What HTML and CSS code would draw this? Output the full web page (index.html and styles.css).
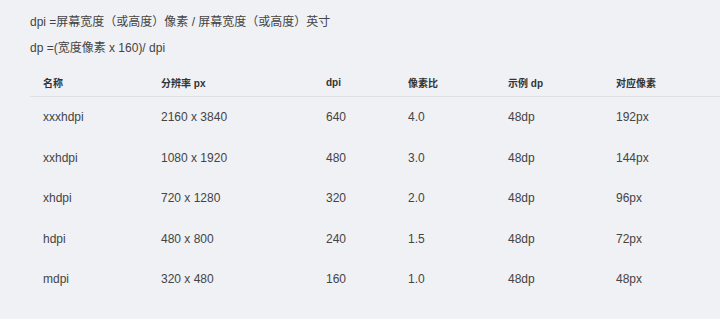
FILE: index.html
```html
<!DOCTYPE html>
<html lang="zh">
<head>
<meta charset="utf-8">
<link rel="stylesheet" href="styles.css">
</head>
<body>
<div class="page">
  <p class="formula">dpi =屏幕宽度（或高度）像素 / 屏幕宽度（或高度）英寸</p>
  <p class="formula">dp =(宽度像素 x 160)/ dpi</p>
  <div class="table">
    <div class="row head">
      <div>名称</div><div>分辨率 px</div><div>dpi</div><div>像素比</div><div>示例 dp</div><div>对应像素</div>
    </div>
    <div class="row">
      <div>xxxhdpi</div><div>2160 x 3840</div><div>640</div><div>4.0</div><div>48dp</div><div>192px</div>
    </div>
    <div class="row">
      <div>xxhdpi</div><div>1080 x 1920</div><div>480</div><div>3.0</div><div>48dp</div><div>144px</div>
    </div>
    <div class="row">
      <div>xhdpi</div><div>720 x 1280</div><div>320</div><div>2.0</div><div>48dp</div><div>96px</div>
    </div>
    <div class="row">
      <div>hdpi</div><div>480 x 800</div><div>240</div><div>1.5</div><div>48dp</div><div>72px</div>
    </div>
    <div class="row">
      <div>mdpi</div><div>320 x 480</div><div>160</div><div>1.0</div><div>48dp</div><div>48px</div>
    </div>
  </div>
</div>
</body>
</html>
```
FILE: styles.css
```css
html, body {
  margin: 0;
  padding: 0;
  background: #f0f1f5;
}
body {
  font-family: "Liberation Sans", "Noto Sans CJK SC", sans-serif;
  color: #444;
  font-size: 12px;
}
.page {
  padding: 14px 0 0 30px;
}
.formula {
  margin: 0 0 10px 0;
  line-height: 16px;
}
.table {
  margin-top: 12px;
}
.row {
  display: grid;
  grid-template-columns: 131px 165px 82px 100px 108px 1fr;
  align-items: center;
  height: 40.5px;
}
.row > div:first-child {
  padding-left: 13px;
}
.row.head {
  height: 28px;
  font-size: 10px;
  font-weight: bold;
  color: #333;
  border-bottom: 1px solid #dfe0e4;
}
```
